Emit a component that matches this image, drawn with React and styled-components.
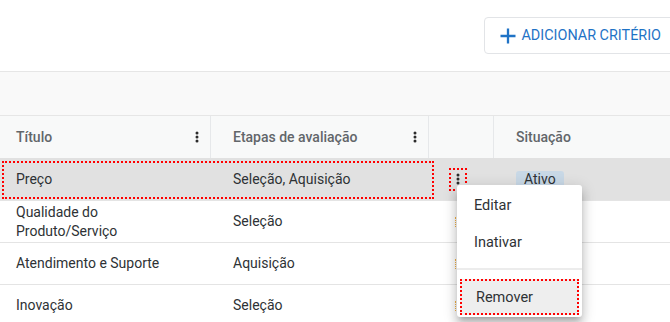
import styled, { createGlobalStyle } from "styled-components"

const Global = createGlobalStyle`
    body {
        margin: 0;
        font-family: Roboto, "Liberation Sans", sans-serif;
        background: #fff;
    }
    * { box-sizing: border-box; }
`;

const Page = styled.div`
    width: 670px;
    height: 322px;
    overflow: hidden;
    position: relative;
`;

const Toolbar = styled.div`
    height: 71px;
    display: flex;
    justify-content: flex-end;
    align-items: center;
`;

const AddButton = styled.button`
    height: 37px;
    margin-right: -14px;
    display: flex;
    align-items: center;
    gap: 5px;
    padding: 0 22px 0 15px;
    background: #fff;
    border: 1px solid #e2e4e7;
    border-radius: 4px;
    color: #1f73c6;
    font-family: Roboto, "Liberation Sans", sans-serif;
    font-size: 14.4px;
    text-transform: uppercase;
`;

const Band = styled.div`
    height: 45px;
    background: #f9f9f9;
    border-top: 1px solid #e6e6e6;
    border-bottom: 1px solid #e6e6e6;
`;

const Grid = styled.div`
    display: grid;
    grid-template-columns: 211px 218px 65px 1fr;
`;

const HeadRow = styled(Grid)`
    height: 42px;
    background: #f8f9f9;
`;

const HeadCell = styled.div`
    display: flex;
    align-items: center;
    justify-content: space-between;
    padding: 0 11px 0 ${(p) => p.pl || 16}px;
    border-right: ${(p) => (p.last ? "none" : "1px solid #e6e8ea")};
    color: #62666a;
    font-size: 14px;
    font-weight: 500;
`;

const Row = styled(Grid)`
    position: relative;
    height: 42px;
    background: ${(p) => (p.selected ? "#e1e1e1" : "#fff")};
    border-top: ${(p) => (p.selected ? "none" : "1px solid #e4e4e4")};
`;

const Cell = styled.div`
    display: flex;
    align-items: center;
    padding-left: ${(p) => p.pl ?? 16}px;
    color: #2e3235;
    font-size: 14px;
    line-height: 19px;
    max-width: ${(p) => p.max || "none"};
`;

const Outline = styled.div`
    position: absolute;
    left: 2px;
    top: 3px;
    width: 432px;
    height: 38px;
    border: 2px dotted #ff0000;
    pointer-events: none;
`;

const DotsBtn = styled.div`
    display: flex;
    align-items: center;
    justify-content: center;
    width: 18px;
    height: 23px;
    margin-left: 20px;
    border: 2px dotted #ff0000;
`;

const FaintMark = styled.div`
    width: 1px;
    height: 10px;
    margin-left: 26px;
    border-left: 1px dotted #f5b041;
`;

const Chip = styled.span`
    display: inline-flex;
    align-items: center;
    height: 18px;
    margin-top: 1px;
    padding: 0 8px;
    border-radius: 3px;
    background: #c8d8e6;
    color: #2e3235;
    font-size: 14px;
`;

const Menu = styled.div`
    position: absolute;
    left: 457px;
    top: 185px;
    width: 125px;
    padding: 2px 0 2px;
    background: #fff;
    border-radius: 3px;
    box-shadow: 0 5px 5px -3px rgba(0, 0, 0, 0.2), 0 8px 10px 1px rgba(0, 0, 0, 0.14),
        0 3px 14px 2px rgba(0, 0, 0, 0.12);
`;

const Item = styled.div`
    height: ${(p) => p.h || 37}px;
    display: flex;
    align-items: center;
    margin: ${(p) => (p.active ? "0 3px" : "0")};
    padding-left: ${(p) => (p.active ? 14 : 17)}px;
    background: ${(p) => (p.active ? "#eeeeee" : "transparent")};
    border: ${(p) => (p.active ? "2px dotted #ff0000" : "none")};
    color: #2e3235;
    font-size: 14.5px;
`;

const Divider = styled.div`
    height: 2px;
    margin: 7px 0 9px;
    background: #ececec;
`;

function Dots({ color = "#2b2b2b" }) {
    return (
        <svg width="4" height="12" viewBox="0 0 4 12">
            <circle cx="2" cy="2" r="1.5" fill={color} />
            <circle cx="2" cy="6" r="1.5" fill={color} />
            <circle cx="2" cy="10" r="1.5" fill={color} />
        </svg>
    );
}

const rows = [
    { title: "Qualidade do Produto/Serviço", steps: "Seleção" },
    { title: "Atendimento e Suporte", steps: "Aquisição" },
    { title: "Inovação", steps: "Seleção" },
];

function App() {
    return (
        <Page>
            <Global />
            <Toolbar>
                <AddButton>
                    <svg width="16" height="16" viewBox="0 0 16 16">
                        <path d="M8 0.5v15M0.5 8h15" stroke="#1f73c6" strokeWidth="2.3" />
                    </svg>
                    Adicionar critério
                </AddButton>
            </Toolbar>
            <Band />
            <HeadRow>
                <HeadCell>Título <Dots /></HeadCell>
                <HeadCell pl={22}>Etapas de avaliação <Dots /></HeadCell>
                <HeadCell />
                <HeadCell pl={22} last>Situação</HeadCell>
            </HeadRow>
            <Row selected>
                <Outline />
                <Cell>Preço</Cell>
                <Cell pl={22}>Seleção, Aquisição</Cell>
                <Cell pl={0}>
                    <DotsBtn><Dots /></DotsBtn>
                </Cell>
                <Cell pl={22}>
                    <Chip>Ativo</Chip>
                </Cell>
            </Row>
            {rows.map((r) => (
                <Row key={r.title}>
                    <Cell max="165px">{r.title}</Cell>
                    <Cell pl={22}>{r.steps}</Cell>
                    <Cell pl={0}><FaintMark /></Cell>
                    <Cell />
                </Row>
            ))}
            <Menu>
                <Item>Editar</Item>
                <Item>Inativar</Item>
                <Divider />
                <Item h={36} active>Remover</Item>
            </Menu>
        </Page>
    );
}

export default App;
